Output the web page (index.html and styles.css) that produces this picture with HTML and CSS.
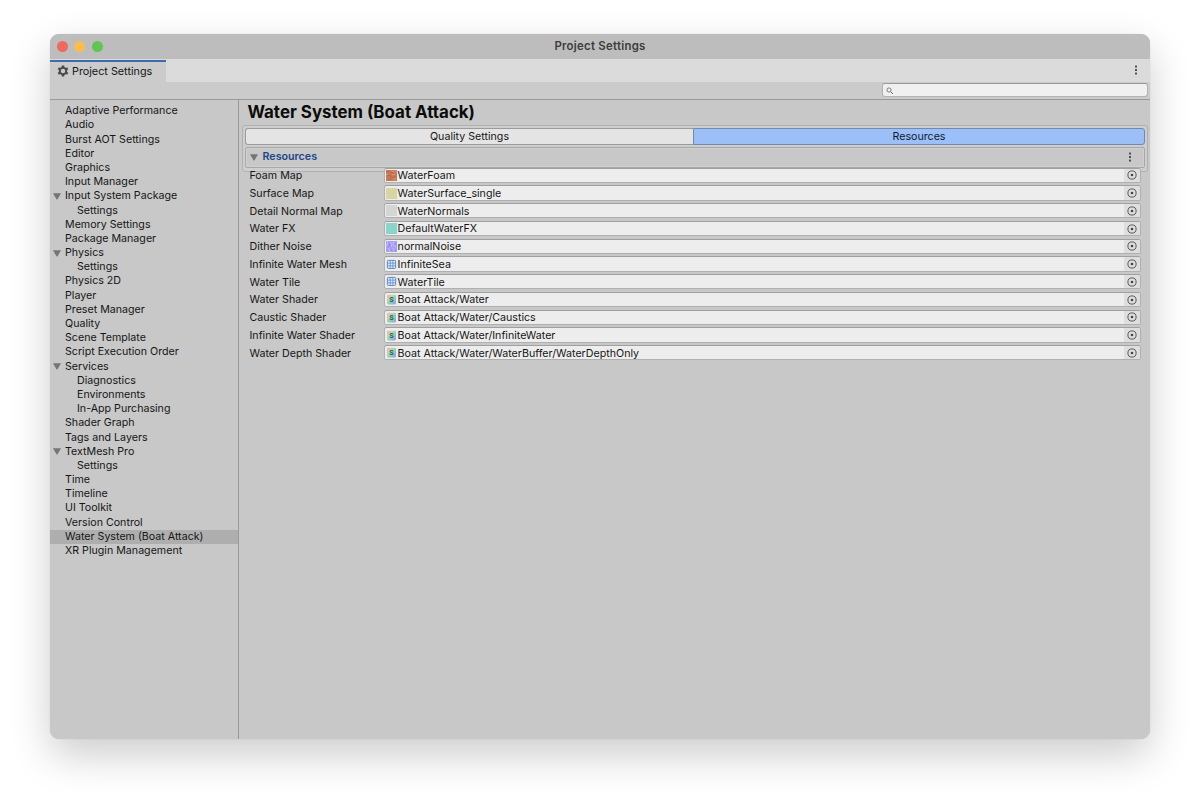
FILE: index.html
```
<!DOCTYPE html>
<html lang="en">
<head>
<meta charset="utf-8">
<title>Project Settings</title>
<link rel="stylesheet" href="styles.css">
</head>
<body>
<svg width="0" height="0" class="defs">
  <defs>
    <linearGradient id="shade" x1="0" y1="0" x2="1" y2="1"><stop offset="0" stop-color="#eab0c8"/><stop offset=".3" stop-color="#cdd3a4"/><stop offset=".65" stop-color="#7fcfc0"/><stop offset="1" stop-color="#b08ce0"/></linearGradient>
    <symbol id="dots" viewBox="0 0 4 10"><rect x="1" y="0.4" width="2" height="2" rx=".5"/><rect x="1" y="4" width="2" height="2" rx=".5"/><rect x="1" y="7.6" width="2" height="2" rx=".5"/></symbol>
    <symbol id="pick" viewBox="0 0 10 10"><circle cx="5" cy="5" r="4.1" fill="none" stroke="#4a4a4a" stroke-width=".9"/><circle cx="5" cy="5" r="1.3" fill="#444"/></symbol>
    <symbol id="tri" viewBox="0 0 8 7"><path d="M0 0.3H8L4.4 6.6H3.6Z" fill="#757575"/></symbol>
    <symbol id="mesh" viewBox="0 0 11 11"><rect x="1.4" y="1.4" width="8.2" height="8" rx=".8" fill="#e6edf6" stroke="#4d7fc4" stroke-width=".9"/><path d="M4.2 1.5V9.3M6.9 1.5V9.3M1.5 4.1H9.5M1.5 6.8H9.5" stroke="#5b8ace" stroke-width=".8"/></symbol>
    <symbol id="foam" viewBox="0 0 11 11"><rect width="11" height="11" fill="#c67c5c"/><path d="M0 2L3 1L5 3L9 2M1 6L4 5L6 8L10 6M2 10L5 9" stroke="#b3674a" fill="none"/><path d="M5 0L7 2L11 1M0 4L2 5M6 5L9 4M7 9L10 9" stroke="#d99372" fill="none"/></symbol>
    <symbol id="noise" viewBox="0 0 11 11"><rect width="11" height="11" fill="#a8a0f5"/><path d="M1 0L2 3L0 5M4 1L6 3L5 6M8 0L7 4L10 6M2 7L4 9L3 11M7 7L8 10" stroke="#c7b8fb" fill="none"/><path d="M3 2L4 5L2 6M9 2L9 4M6 8L5 10M10 8L9 10" stroke="#8e84ea" fill="none"/></symbol>
  </defs>
</svg>
<div class="window">
  <header class="titlebar"><div class="lights"><i class="red"></i><i class="yellow"></i><i class="green"></i></div><span>Project Settings</span></header>
  <nav class="tabstrip">
    <div class="tab">
      <svg width="12" height="12" viewBox="0 0 12 12"><circle cx="6" cy="6" r="3.2" fill="none" stroke="#4b4b4b" stroke-width="2"/><path d="M6 .5V2.5M6 9.5V11.5M1.25 3.25L3 4.25M9 7.75L10.75 8.75M1.25 8.75L3 7.75M9 4.25L10.75 3.25" stroke="#4b4b4b" stroke-width="2.5"/></svg>
      <span>Project Settings</span>
    </div>
    <svg class="menu" width="4" height="10"><use href="#dots"/></svg>
  </nav>
  <div class="toolbar"><div class="search"><svg width="8" height="8" viewBox="0 0 8 8"><circle cx="3" cy="3" r="2.1" fill="none" stroke="#666" stroke-width=".8"/><path d="M4.6 4.6L7 7" stroke="#666" stroke-width="1"/></svg></div></div>
  <div class="body">
    <ul class="sidebar">
      <li>Adaptive Performance</li><li>Audio</li><li>Burst AOT Settings</li><li>Editor</li><li>Graphics</li><li>Input Manager</li>
      <li class="parent"><svg width="8" height="7"><use href="#tri"/></svg>Input System Package</li><li class="child">Settings</li>
      <li>Memory Settings</li><li>Package Manager</li>
      <li class="parent"><svg width="8" height="7"><use href="#tri"/></svg>Physics</li><li class="child">Settings</li>
      <li>Physics 2D</li><li>Player</li><li>Preset Manager</li><li>Quality</li><li>Scene Template</li><li>Script Execution Order</li>
      <li class="parent"><svg width="8" height="7"><use href="#tri"/></svg>Services</li><li class="child">Diagnostics</li><li class="child">Environments</li><li class="child">In-App Purchasing</li>
      <li>Shader Graph</li><li>Tags and Layers</li>
      <li class="parent"><svg width="8" height="7"><use href="#tri"/></svg>TextMesh Pro</li><li class="child">Settings</li>
      <li>Time</li><li>Timeline</li><li>UI Toolkit</li><li>Version Control</li><li class="selected">Water System (Boat Attack)</li><li>XR Plugin Management</li>
    </ul>
    <main class="content">
      <h1>Water System (Boat Attack)</h1>
      <section class="group">
        <div class="switch"><div class="quality">Quality Settings</div><div class="active">Resources</div></div>
        <div class="foldout"><svg width="8" height="7"><use href="#tri"/></svg><b>Resources</b><svg class="more" width="4" height="10"><use href="#dots"/></svg></div>
      </section>
      <div class="fields">
        <div class="row"><label>Foam Map</label><div class="field"><svg class="thumb"><use href="#foam"/></svg><span>WaterFoam</span><div class="picker"><svg width="10" height="10"><use href="#pick"/></svg></div></div></div>
        <div class="row"><label>Surface Map</label><div class="field"><i class="thumb surface"></i><span>WaterSurface_single</span><div class="picker"><svg width="10" height="10"><use href="#pick"/></svg></div></div></div>
        <div class="row"><label>Detail Normal Map</label><div class="field"><i class="thumb normals"></i><span>WaterNormals</span><div class="picker"><svg width="10" height="10"><use href="#pick"/></svg></div></div></div>
        <div class="row"><label>Water FX</label><div class="field"><i class="thumb fx"></i><span>DefaultWaterFX</span><div class="picker"><svg width="10" height="10"><use href="#pick"/></svg></div></div></div>
        <div class="row"><label>Dither Noise</label><div class="field"><svg class="thumb"><use href="#noise"/></svg><span>normalNoise</span><div class="picker"><svg width="10" height="10"><use href="#pick"/></svg></div></div></div>
        <div class="row"><label>Infinite Water Mesh</label><div class="field"><svg class="thumb"><use href="#mesh"/></svg><span>InfiniteSea</span><div class="picker"><svg width="10" height="10"><use href="#pick"/></svg></div></div></div>
        <div class="row"><label>Water Tile</label><div class="field"><svg class="thumb"><use href="#mesh"/></svg><span>WaterTile</span><div class="picker"><svg width="10" height="10"><use href="#pick"/></svg></div></div></div>
        <div class="row"><label>Water Shader</label><div class="field"><svg class="thumb" viewBox="0 0 11 11"><rect x="1" y=".8" width="9" height="9.6" rx="1.3" fill="url(#shade)"/><text class="s" x="5.5" y="8.2">S</text></svg><span>Boat Attack/Water</span><div class="picker"><svg width="10" height="10"><use href="#pick"/></svg></div></div></div>
        <div class="row"><label>Caustic Shader</label><div class="field"><svg class="thumb" viewBox="0 0 11 11"><rect x="1" y=".8" width="9" height="9.6" rx="1.3" fill="url(#shade)"/><text class="s" x="5.5" y="8.2">S</text></svg><span>Boat Attack/Water/Caustics</span><div class="picker"><svg width="10" height="10"><use href="#pick"/></svg></div></div></div>
        <div class="row"><label>Infinite Water Shader</label><div class="field"><svg class="thumb" viewBox="0 0 11 11"><rect x="1" y=".8" width="9" height="9.6" rx="1.3" fill="url(#shade)"/><text class="s" x="5.5" y="8.2">S</text></svg><span>Boat Attack/Water/InfiniteWater</span><div class="picker"><svg width="10" height="10"><use href="#pick"/></svg></div></div></div>
        <div class="row"><label>Water Depth Shader</label><div class="field"><svg class="thumb" viewBox="0 0 11 11"><rect x="1" y=".8" width="9" height="9.6" rx="1.3" fill="url(#shade)"/><text class="s" x="5.5" y="8.2">S</text></svg><span>Boat Attack/Water/WaterBuffer/WaterDepthOnly</span><div class="picker"><svg width="10" height="10"><use href="#pick"/></svg></div></div></div>
      </div>
    </main>
  </div>
</div>
</body>
</html>
```
FILE: styles.css
```
* { box-sizing: border-box; }
body { margin: 0; height: 804px; padding: 34px 50px 0; background: #fff; font-family: Inter, sans-serif; font-size: 10.67px; color: #161616; overflow: hidden; }
.defs { display: block; }
.window { width: 1100px; height: 704.6px; border-radius: 9px; overflow: hidden; background: #c8c8c8; display: flex; flex-direction: column; box-shadow: 0 16px 40px rgba(0,0,0,.2), 0 0 1px rgba(0,0,0,.2); }
.titlebar { flex: none; height: 25px; background: #bdbdbd; display: grid; grid-template-columns: 1fr auto 1fr; align-items: center; font-weight: 600; font-size: 11.4px; letter-spacing: .26px; color: #3c3c3c; padding-bottom: 1px; }
.lights { display: flex; gap: 6.7px; padding-left: 6.5px; }
.lights i { width: 11px; height: 11px; border-radius: 50%; }
.red { background: #ed6a5f; }
.yellow { background: #f5bf4f; }
.green { background: #61c454; }
.tabstrip { flex: none; height: 23px; background: #dbdbdb; display: flex; justify-content: space-between; align-items: center; padding: 0 12px 1px 0; }
.tab { width: 116px; height: 22px; align-self: flex-start; background: #cbcbcb; border-top: 2px solid #3c6bb0; display: flex; align-items: center; gap: 3px; padding: 0 0 2px 7px; margin-top: 1px; font-size: 10.8px; box-shadow: 0 1px #cbcbcb; }
.menu, .more { fill: #4a4a4a; }
.toolbar { flex: none; height: 18px; background: #cbcbcb; border-bottom: 1px solid #999; padding: 1px 2.5px 2px; display: flex; justify-content: flex-end; }
.search { width: 266px; height: 14.4px; border: 1px solid #b3b3b3; border-top-color: #999; border-radius: 3px; background: #f0f0f0; padding: 1px 0 0 3px; display: flex; align-items: center; }
.body { flex: 1; display: flex; min-height: 0; }
.sidebar { margin: 0; padding: 4.2px 0 0; width: 189px; border-right: 1px solid #999; list-style: none; }
.sidebar li { height: 14.19px; line-height: 14.19px; padding-left: 15px; white-space: nowrap; display: flex; align-items: center; }
.sidebar .parent { padding-left: 3px; gap: 4px; }
.sidebar .child { padding-left: 27px; }
.sidebar .selected { background: #aeaeae; }
.content { flex: 1; min-width: 0; padding: 0 2px 0 3px; }
h1 { margin: 0; height: 25px; line-height: 24px; padding-left: 5.5px; font-size: 16.9px; font-weight: 700; color: #0c0c0c; }
.group { height: 46.5px; border: 1px solid #b0b0b0; border-radius: 3px; background: #cecece; padding: 2px; display: flex; flex-direction: column; gap: 2px; }
.switch { display: grid; grid-template-columns: 448px 1fr; height: 17px; flex: none; }
.switch div { border: 1px solid #9b9b9b; text-align: center; line-height: 15px; background: #e4e4e4; }
.switch .quality { border-radius: 3px 0 0 3px; border-right: 0; }
.switch .active { background: #9dbff8; border-color: #7189b0; border-radius: 0 3px 3px 0; color: #0c1c36; }
.foldout { height: 21px; border: 1px solid #a8a8a8; border-radius: 2px; background: #c8c8c8; box-shadow: inset 0 0 0 1px #d0d0d0; display: flex; align-items: center; padding: 0 12px 2px 4px; gap: 4.5px; }
.foldout svg { position: relative; top: .5px; }
.foldout b { flex: 1; color: #1c4587; font-weight: 600; font-size: 10.7px; }
.fields { margin-top: -5.1px; padding: 0 6.6px 0 7.5px; position: relative; display: flex; flex-direction: column; }
.row { height: 17.75px; display: flex; align-items: center; }
.row label { width: 134.8px; padding-top: .8px; }
.field { flex: 1; height: 15.2px; border: 1px solid #b0b0b0; border-top-color: #a0a0a0; border-radius: 2.5px; background: #ededed; display: flex; align-items: center; padding-left: 1px; overflow: hidden; }
.field span { flex: 1; padding: .8px 0 0 .3px; }
.thumb { width: 11px; height: 11px; flex: none; }
.surface { background: #d6d5a3; }
.normals { background: #d5d5d5; }
.fx { background: #8bd3cb; }
.picker { width: 16px; height: 14px; background: #dedede; display: flex; align-items: center; justify-content: center; }
.s { font: 700 6.8px Inter, sans-serif; text-anchor: middle; fill: #245868; }
```
